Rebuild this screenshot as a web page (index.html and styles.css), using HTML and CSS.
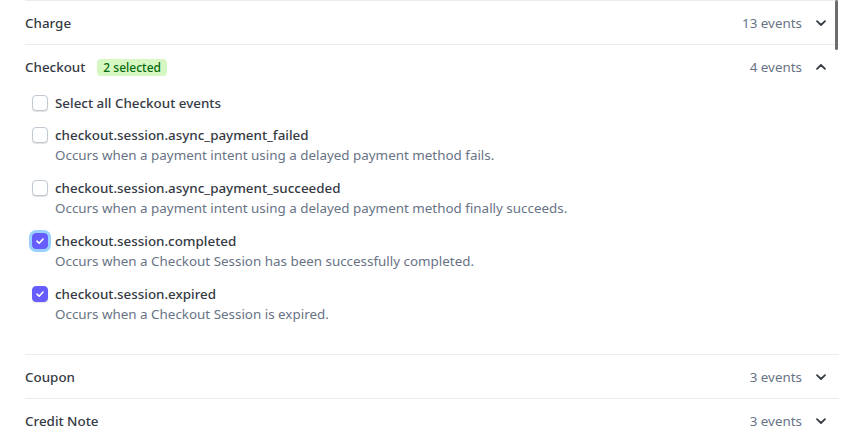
FILE: index.html
```html
<!DOCTYPE html>
<html>
<head>
<meta charset="utf-8">
<link rel="stylesheet" href="styles.css">
</head>
<body>
<div class="page">
  <div class="list">
    <div class="section">
      <div class="head">
        <div class="title">Charge</div>
        <div class="meta"><span class="count">13 events</span>
          <svg class="chev" viewBox="0 0 12 12"><path d="M2 4.2 6 8l4-3.8"/></svg></div>
      </div>
    </div>
    <div class="section">
      <div class="head">
        <div class="title">Checkout <span class="badge">2 selected</span></div>
        <div class="meta"><span class="count">4 events</span>
          <svg class="chev" viewBox="0 0 12 12"><path d="M2 7.8 6 4l4 3.8"/></svg></div>
      </div>
      <div class="body">
        <label class="item all">
          <span class="cb"></span>
          <span class="name">Select all Checkout events</span>
        </label>
        <div class="item">
          <div class="row"><span class="cb"></span><span class="name">checkout.session.async_payment_failed</span></div>
          <div class="desc">Occurs when a payment intent using a delayed payment method fails.</div>
        </div>
        <div class="item">
          <div class="row"><span class="cb"></span><span class="name">checkout.session.async_payment_succeeded</span></div>
          <div class="desc">Occurs when a payment intent using a delayed payment method finally succeeds.</div>
        </div>
        <div class="item">
          <div class="row"><span class="cb on focus"><svg viewBox="0 0 16 16"><path d="M4.5 8.2 7 10.5l4.5-4.8"/></svg></span><span class="name">checkout.session.completed</span></div>
          <div class="desc">Occurs when a Checkout Session has been successfully completed.</div>
        </div>
        <div class="item">
          <div class="row"><span class="cb on"><svg viewBox="0 0 16 16"><path d="M4.5 8.2 7 10.5l4.5-4.8"/></svg></span><span class="name">checkout.session.expired</span></div>
          <div class="desc">Occurs when a Checkout Session is expired.</div>
        </div>
      </div>
    </div>
    <div class="section">
      <div class="head">
        <div class="title">Coupon</div>
        <div class="meta"><span class="count">3 events</span>
          <svg class="chev" viewBox="0 0 12 12"><path d="M2 4.2 6 8l4-3.8"/></svg></div>
      </div>
    </div>
    <div class="section">
      <div class="head">
        <div class="title">Credit Note</div>
        <div class="meta"><span class="count">3 events</span>
          <svg class="chev" viewBox="0 0 12 12"><path d="M2 4.2 6 8l4-3.8"/></svg></div>
      </div>
    </div>
  </div>
  <div class="scrollbar"></div>
</div>
</body>
</html>
```
FILE: styles.css
```css
html, body {
  margin: 0;
  padding: 0;
  background: #ffffff;
  overflow: hidden;
}
body {
  font-family: "Noto Sans", "Open Sans", sans-serif;
  font-size: 13.4px;
  color: #353a44;
}
.page {
  position: relative;
  height: 428px;
  overflow: hidden;
}
.list {
  margin-left: 25px;
  width: 814px;
  border-top: 1px solid #ebeef1;
}
.section {
  border-bottom: 1px solid #ebeef1;
}
.head {
  height: 43px;
  box-sizing: border-box;
  padding-top: 1px;
  display: flex;
  align-items: center;
  justify-content: space-between;
  padding-right: 12px;
}
.title {
  font-weight: 500;
  display: flex;
  align-items: center;
  gap: 12px;
}
.badge {
  background: #d7f7c2;
  color: #05690d;
  font-size: 12px;
  font-weight: 500;
  line-height: 17px;
  padding: 0 6px;
  border-radius: 4px;
}
.meta {
  display: flex;
  align-items: center;
  gap: 13px;
}
.count {
  color: #687385;
}
.chev {
  width: 12px;
  height: 12px;
  fill: none;
  stroke: #353a44;
  stroke-width: 1.8;
  stroke-linecap: round;
  stroke-linejoin: round;
}
.body {
  padding: 5px 0 29px 7px;
  display: flex;
  flex-direction: column;
  gap: 12px;
}
.item {
  display: flex;
  flex-direction: column;
}
.item.all {
  flex-direction: row;
  align-items: center;
  gap: 7px;
  line-height: 20px;
  font-weight: 500;
}
.row {
  display: flex;
  align-items: center;
  gap: 7px;
  line-height: 20px;
}
.name {
  font-weight: 500;
}
.desc {
  padding-left: 23px;
  line-height: 21px;
  color: #687385;
}
.cb {
  width: 14px;
  height: 14px;
  border: 1px solid #c0c8d2;
  border-radius: 4px;
  box-shadow: 0 1px 1px rgba(0, 0, 0, 0.12);
  background: #fff;
  flex-shrink: 0;
  display: flex;
  align-items: center;
  justify-content: center;
}
.cb.on {
  background: #675dff;
  border-color: #675dff;
}
.cb.focus {
  box-shadow: 0 0 0 3px #9ad0ff;
}
.cb svg {
  width: 16px;
  height: 16px;
  fill: none;
  stroke: #fff;
  stroke-width: 1.8;
  stroke-linecap: round;
  stroke-linejoin: round;
}
.scrollbar {
  position: absolute;
  left: 835px;
  top: 0;
  width: 3px;
  height: 50px;
  background: #6d6d6d;
  border-radius: 2px;
}
```
